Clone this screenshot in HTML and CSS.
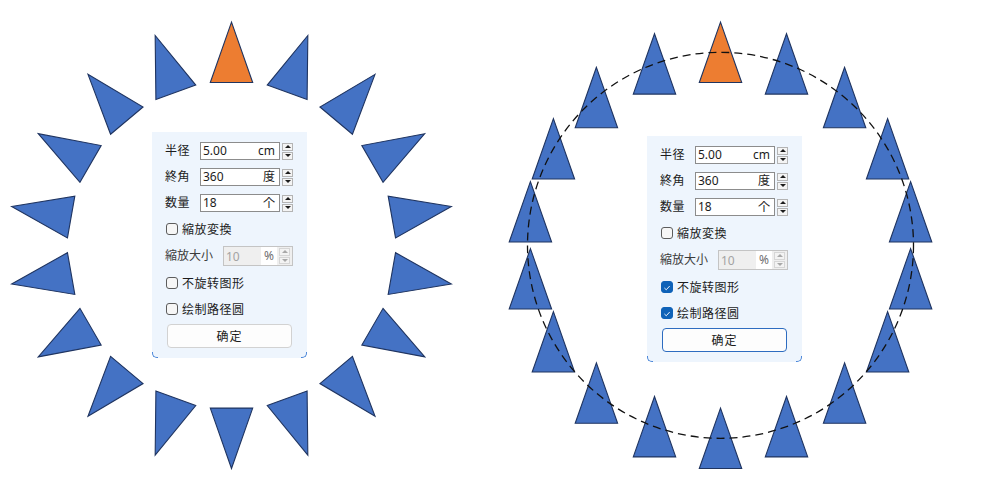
FILE: index.html
```html
<!DOCTYPE html>
<html lang="ja">
<head>
<meta charset="utf-8">
<title>Circular array</title>
<link rel="stylesheet" href="styles.css">
</head>
<body>
<div class="canvas">
  <svg class="shapes" width="996" height="496" viewBox="0 0 996 496" xmlns="http://www.w3.org/2000/svg">
    <defs>
      <polygon id="tri" points="0,-30.2 -21.2,30.2 21.2,30.2"/>
    </defs>
    <g class="left">
      <use href="#tri" class="orange" transform="translate(231.5 52.3) rotate(0)"/>
      <use href="#tri" transform="translate(297.5 63.9) rotate(20)"/>
      <use href="#tri" transform="translate(355.6 97.5) rotate(40)"/>
      <use href="#tri" transform="translate(398.6 148.8) rotate(60)"/>
      <use href="#tri" transform="translate(421.6 211.8) rotate(80)"/>
      <use href="#tri" transform="translate(421.6 278.8) rotate(100)"/>
      <use href="#tri" transform="translate(398.6 341.8) rotate(120)"/>
      <use href="#tri" transform="translate(355.6 393.1) rotate(140)"/>
      <use href="#tri" transform="translate(297.5 426.7) rotate(160)"/>
      <use href="#tri" transform="translate(231.5 438.3) rotate(180)"/>
      <use href="#tri" transform="translate(165.5 426.7) rotate(200)"/>
      <use href="#tri" transform="translate(107.4 393.1) rotate(220)"/>
      <use href="#tri" transform="translate(64.4 341.8) rotate(240)"/>
      <use href="#tri" transform="translate(41.4 278.8) rotate(260)"/>
      <use href="#tri" transform="translate(41.4 211.8) rotate(280)"/>
      <use href="#tri" transform="translate(64.4 148.8) rotate(300)"/>
      <use href="#tri" transform="translate(107.4 97.5) rotate(320)"/>
      <use href="#tri" transform="translate(165.5 63.9) rotate(340)"/>
    </g>
    <g class="right">
      <use href="#tri" class="orange" transform="translate(720.5 52.3)"/>
      <use href="#tri" transform="translate(786.5 63.9)"/>
      <use href="#tri" transform="translate(844.6 97.5)"/>
      <use href="#tri" transform="translate(887.6 148.8)"/>
      <use href="#tri" transform="translate(910.6 211.8)"/>
      <use href="#tri" transform="translate(910.6 278.8)"/>
      <use href="#tri" transform="translate(887.6 341.8)"/>
      <use href="#tri" transform="translate(844.6 393.1)"/>
      <use href="#tri" transform="translate(786.5 426.7)"/>
      <use href="#tri" transform="translate(720.5 438.3)"/>
      <use href="#tri" transform="translate(654.5 426.7)"/>
      <use href="#tri" transform="translate(596.4 393.1)"/>
      <use href="#tri" transform="translate(553.4 341.8)"/>
      <use href="#tri" transform="translate(530.4 278.8)"/>
      <use href="#tri" transform="translate(530.4 211.8)"/>
      <use href="#tri" transform="translate(553.4 148.8)"/>
      <use href="#tri" transform="translate(596.4 97.5)"/>
      <use href="#tri" transform="translate(654.5 63.9)"/>
      <circle class="path-circle" cx="720.5" cy="245.3" r="193"/>
    </g>
  </svg>

  <div class="panel panel-left">
    <div class="row">
      <span class="lbl">半径</span>
      <div class="field"><span class="val">5.00</span><span class="unit">cm</span></div>
      <div class="spin"><span class="up"></span><span class="down"></span></div>
    </div>
    <div class="row">
      <span class="lbl">終角</span>
      <div class="field"><span class="val">360</span><span class="unit">度</span></div>
      <div class="spin"><span class="up"></span><span class="down"></span></div>
    </div>
    <div class="row">
      <span class="lbl">数量</span>
      <div class="field"><span class="val">18</span><span class="unit">个</span></div>
      <div class="spin"><span class="up"></span><span class="down"></span></div>
    </div>
    <div class="check-row"><span class="box"></span><span>縮放変換</span></div>
    <div class="row row-dis">
      <span class="lbl lbl-wide">縮放大小</span>
      <div class="field-dis">
        <span class="val">10</span><span class="unit-dis">%</span>
        <div class="spin spin-dis"><span class="up"></span><span class="down"></span></div>
      </div>
    </div>
    <div class="check-row"><span class="box"></span><span>不旋转图形</span></div>
    <div class="check-row"><span class="box"></span><span>绘制路径圆</span></div>
    <div class="btn">确定</div>
  </div>

  <div class="panel panel-right">
    <div class="row">
      <span class="lbl">半径</span>
      <div class="field"><span class="val">5.00</span><span class="unit">cm</span></div>
      <div class="spin"><span class="up"></span><span class="down"></span></div>
    </div>
    <div class="row">
      <span class="lbl">終角</span>
      <div class="field"><span class="val">360</span><span class="unit">度</span></div>
      <div class="spin"><span class="up"></span><span class="down"></span></div>
    </div>
    <div class="row">
      <span class="lbl">数量</span>
      <div class="field"><span class="val">18</span><span class="unit">个</span></div>
      <div class="spin"><span class="up"></span><span class="down"></span></div>
    </div>
    <div class="check-row"><span class="box"></span><span>縮放変換</span></div>
    <div class="row row-dis">
      <span class="lbl lbl-wide">縮放大小</span>
      <div class="field-dis">
        <span class="val">10</span><span class="unit-dis">%</span>
        <div class="spin spin-dis"><span class="up"></span><span class="down"></span></div>
      </div>
    </div>
    <div class="check-row"><span class="box checked"><svg viewBox="0 0 12 12" width="12" height="12"><path d="M3.2 6.3 L5.1 8.1 L8.9 4" fill="none" stroke="#fff" stroke-width="1.1" stroke-linecap="round" stroke-linejoin="round"/></svg></span><span>不旋转图形</span></div>
    <div class="check-row"><span class="box checked"><svg viewBox="0 0 12 12" width="12" height="12"><path d="M3.2 6.3 L5.1 8.1 L8.9 4" fill="none" stroke="#fff" stroke-width="1.1" stroke-linecap="round" stroke-linejoin="round"/></svg></span><span>绘制路径圆</span></div>
    <div class="btn btn-default">确定</div>
  </div>
</div>
</body>
</html>
```

FILE: styles.css
```css
html, body {
  margin: 0;
  padding: 0;
  background: #ffffff;
}

.canvas {
  position: relative;
  width: 996px;
  height: 496px;
  overflow: hidden;
  font-family: "Noto Sans", "Noto Sans CJK JP", sans-serif;
  font-size: 12px;
  color: #1c1c1c;
}

.shapes {
  display: block;
}

.shapes use {
  fill: #4472c4;
  stroke: #1f3460;
  stroke-width: 1.1;
  stroke-linejoin: miter;
}

.shapes use.orange {
  fill: #ed7d31;
}

.path-circle {
  fill: none;
  stroke: #111;
  stroke-width: 1.3;
  stroke-dasharray: 8 5;
}

.panel {
  position: absolute;
  width: 155px;
  height: 226px;
  box-sizing: border-box;
  padding: 10px 14px 10px 13px;
  background: #eef5fd;
  display: flex;
  flex-direction: column;
  gap: 8px;
  border-radius: 0 0 5px 5px;
}

.panel::before,
.panel::after {
  content: "";
  position: absolute;
  bottom: 0;
  width: 5px;
  height: 5px;
  border-bottom: 1.5px solid #4a86d8;
}

.panel::before {
  left: 0;
  border-left: 1.5px solid #4a86d8;
  border-bottom-left-radius: 5px;
}

.panel::after {
  right: 0;
  border-right: 1.5px solid #4a86d8;
  border-bottom-right-radius: 5px;
}

.panel-left {
  left: 152px;
  top: 132px;
}

.panel-right {
  left: 647px;
  top: 136px;
}

.row {
  display: flex;
  align-items: center;
  height: 18px;
}

.lbl {
  width: 35px;
  flex: none;
  line-height: 18px;
  letter-spacing: 0.5px;
}

.lbl-wide {
  width: 58px;
  color: #3c3c3c;
  letter-spacing: 0;
}

.field {
  flex: 1;
  height: 18px;
  box-sizing: border-box;
  border: 1px solid #8c8c8c;
  background: #ffffff;
  display: flex;
  align-items: center;
  justify-content: space-between;
  padding: 0 4px 0 2px;
  line-height: 16px;
}

.unit {
  color: #1c1c1c;
}

.spin {
  flex: none;
  width: 11px;
  height: 17px;
  margin-left: 2px;
  display: flex;
  flex-direction: column;
  gap: 1px;
}

.spin span {
  flex: 1;
  box-sizing: border-box;
  border: 1px solid #b4b4b4;
  background: #f4f4f4;
  position: relative;
}

.spin span::after {
  content: "";
  position: absolute;
  left: 50%;
  top: 50%;
  margin-left: -3px;
  border-left: 3px solid transparent;
  border-right: 3px solid transparent;
}

.spin .up::after {
  margin-top: -2px;
  border-bottom: 3.5px solid #1c1c1c;
}

.spin .down::after {
  margin-top: -1.5px;
  border-top: 3.5px solid #1c1c1c;
}

.row-dis {
  height: 20px;
}

.field-dis {
  flex: 1;
  height: 20px;
  box-sizing: border-box;
  border: 1px solid #c4c4c4;
  background: #efefef;
  display: flex;
  align-items: center;
  padding: 0 2px 0 2px;
  color: #a3a3a3;
}

.field-dis .val {
  flex: 1;
}

.unit-dis {
  background: #ffffff;
  color: #6e6e6e;
  width: 16px;
  height: 18px;
  line-height: 18px;
  text-align: center;
}

.spin-dis {
  margin-left: 2px;
  width: 11px;
  height: 16px;
}

.spin-dis span {
  border-color: #d6d6d6;
  background: #f3f3f3;
}

.spin-dis .up::after {
  border-bottom-color: #a8a8a8;
}

.spin-dis .down::after {
  border-top-color: #a8a8a8;
}

.check-row {
  display: flex;
  align-items: center;
  height: 18px;
  padding-left: 1px;
  gap: 4px;
  letter-spacing: 0.5px;
}

.box {
  width: 12px;
  height: 12px;
  box-sizing: border-box;
  border: 1px solid #5c5c5c;
  border-radius: 3px;
  background: #f6f6f6;
  flex: none;
  display: flex;
}

.box.checked {
  background: #0f62b8;
  border-color: #0f62b8;
}

.btn {
  margin-top: -2px;
  margin-left: 2px;
  width: 125px;
  height: 24px;
  box-sizing: border-box;
  border: 1px solid #d2d2d2;
  border-radius: 4px;
  background: #fdfdfd;
  display: flex;
  align-items: center;
  justify-content: center;
  letter-spacing: 1px;
}

.btn-default {
  border-color: #2d6cc0;
}
```
